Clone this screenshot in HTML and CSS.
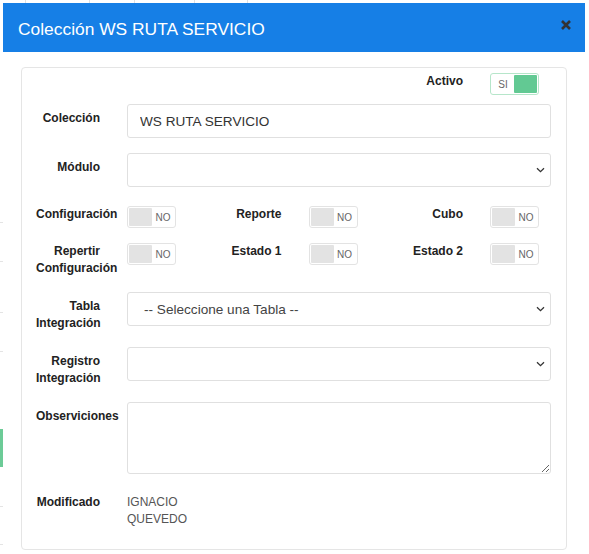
FILE: index.html
```html
<!DOCTYPE html>
<html lang="es">
<head>
<meta charset="utf-8">
<title>Colección WS RUTA SERVICIO</title>
<link rel="stylesheet" href="styles.css">
</head>
<body>
<div class="modal">
  <div class="modal-header">
    <h4 class="modal-title">Colección WS RUTA SERVICIO</h4>
    <button class="close" type="button" aria-label="Cerrar">
      <svg width="10" height="10" viewBox="0 0 10 10"><path d="M1 1L9 9M9 1L1 9" stroke="#333" stroke-width="2.6" fill="none"/></svg>
    </button>
  </div>
  <div class="modal-body">
    <div class="card">
      <div class="toggle-grid row-activo">
        <div class="group group-3">
          <label class="lbl">Activo</label>
          <div class="switch on"><span class="sw-text">SI</span><span class="sw-knob"></span></div>
        </div>
      </div>

      <div class="field row-coleccion">
        <label class="lbl">Colección</label>
        <input class="control" type="text" value="WS RUTA SERVICIO">
      </div>

      <div class="field row-modulo">
        <label class="lbl">Módulo</label>
        <div class="select-wrap">
          <select class="control"><option></option></select>
          <svg class="chev" width="9" height="6" viewBox="0 0 9 6"><path d="M1 1.2L4.5 4.6L8 1.2" stroke="#333" stroke-width="1.3" fill="none"/></svg>
        </div>
      </div>

      <div class="toggle-grid row-config">
        <div class="group">
          <label class="lbl">Configuración</label>
          <div class="switch"><span class="sw-knob"></span><span class="sw-text">NO</span></div>
        </div>
        <div class="group">
          <label class="lbl">Reporte</label>
          <div class="switch"><span class="sw-knob"></span><span class="sw-text">NO</span></div>
        </div>
        <div class="group">
          <label class="lbl">Cubo</label>
          <div class="switch"><span class="sw-knob"></span><span class="sw-text">NO</span></div>
        </div>
      </div>

      <div class="toggle-grid row-repertir">
        <div class="group">
          <label class="lbl">Repertir Configuración</label>
          <div class="switch"><span class="sw-knob"></span><span class="sw-text">NO</span></div>
        </div>
        <div class="group">
          <label class="lbl">Estado 1</label>
          <div class="switch"><span class="sw-knob"></span><span class="sw-text">NO</span></div>
        </div>
        <div class="group">
          <label class="lbl">Estado 2</label>
          <div class="switch"><span class="sw-knob"></span><span class="sw-text">NO</span></div>
        </div>
      </div>

      <div class="field row-tabla">
        <label class="lbl">Tabla Integración</label>
        <div class="select-wrap">
          <select class="control"><option>-- Seleccione una Tabla --</option></select>
          <svg class="chev" width="9" height="6" viewBox="0 0 9 6"><path d="M1 1.2L4.5 4.6L8 1.2" stroke="#333" stroke-width="1.3" fill="none"/></svg>
        </div>
      </div>

      <div class="field row-registro">
        <label class="lbl">Registro Integración</label>
        <div class="select-wrap">
          <select class="control"><option></option></select>
          <svg class="chev" width="9" height="6" viewBox="0 0 9 6"><path d="M1 1.2L4.5 4.6L8 1.2" stroke="#333" stroke-width="1.3" fill="none"/></svg>
        </div>
      </div>

      <div class="field row-obs">
        <label class="lbl">Observiciones</label>
        <textarea class="control area"></textarea>
      </div>

      <div class="field row-mod">
        <label class="lbl plain">Modificado</label>
        <div class="value">IGNACIO<br>QUEVEDO</div>
      </div>
    </div>
  </div>
</div>
</body>
</html>
```

FILE: styles.css
```css
* { box-sizing: border-box; }

html, body { height: 100%; }

body {
  margin: 0;
  padding: 3px 0 0 3px;
  overflow: hidden;
  font-family: "Liberation Sans", Arial, sans-serif;
  color: #222;
  background:
    linear-gradient(#e0e0e0, #e0e0e0) 25px 0 / 1px 3px no-repeat,
    linear-gradient(#e0e0e0, #e0e0e0) 89px 0 / 1px 3px no-repeat,
    linear-gradient(#e0e0e0, #e0e0e0) 134px 0 / 1px 3px no-repeat,
    linear-gradient(#e0e0e0, #e0e0e0) 194px 0 / 1px 3px no-repeat,
    linear-gradient(#e0e0e0, #e0e0e0) 247px 0 / 1px 3px no-repeat,
    linear-gradient(#e4e4e4, #e4e4e4) 0 222px / 3px 1px no-repeat,
    linear-gradient(#e4e4e4, #e4e4e4) 0 261px / 3px 1px no-repeat,
    linear-gradient(#e4e4e4, #e4e4e4) 0 312px / 3px 1px no-repeat,
    linear-gradient(#e4e4e4, #e4e4e4) 0 351px / 3px 1px no-repeat,
    linear-gradient(#e4e4e4, #e4e4e4) 0 506px / 3px 1px no-repeat,
    linear-gradient(#e4e4e4, #e4e4e4) 0 544px / 3px 1px no-repeat,
    linear-gradient(#6ccb97, #6ccb97) 0 429px / 3px 38px no-repeat,
    #fff;
}

.modal {
  width: 582px;
  min-height: 560px;
  background: #fff;
}

.modal-header {
  height: 49px;
  background: #167fe6;
  display: flex;
  align-items: center;
  justify-content: space-between;
  padding: 3px 14px 0 15px;
}

.modal-title {
  margin: 0;
  font-size: 17.4px;
  font-weight: 400;
  color: #fff;
}

.close {
  align-self: flex-start;
  margin-top: 14px;
  border: 0;
  background: none;
  padding: 0;
  display: flex;
  cursor: pointer;
}

.modal-body {
  padding: 15px 18px 0;
}

.card {
  border: 1px solid #e5e5e5;
  border-radius: 4px;
  padding: 5px 15px 21px 14px;
}

.toggle-grid {
  display: grid;
  grid-template-columns: repeat(3, 140px);
  column-gap: 41.5px;
}

.group {
  display: flex;
  align-items: flex-start;
  gap: 27px;
}

.group-3 { grid-column: 3; }

.lbl {
  width: 64px;
  flex: none;
  text-align: right;
  font-weight: 700;
  font-size: 12px;
  line-height: 17px;
  color: #222;
}

.field {
  display: flex;
  align-items: flex-start;
  gap: 27px;
}

.field .lbl { padding-top: 6px; }
.field .lbl.plain { padding-top: 0; }

.control {
  flex: 1;
  min-width: 0;
  width: 100%;
  height: 34px;
  margin: 0;
  border: 1px solid #e0e0e0;
  border-radius: 3px;
  background: #fff;
  font-family: "Liberation Sans", Arial, sans-serif;
  font-size: 13.6px;
  color: #333;
  padding: 0 12px;
}

.select-wrap {
  flex: 1;
  min-width: 0;
  position: relative;
  display: flex;
}

select.control {
  appearance: none;
  -webkit-appearance: none;
  padding-left: 16px;
  color: #444;
}

.chev {
  position: absolute;
  right: 6px;
  top: 14px;
  pointer-events: none;
}

.control.area {
  height: 72px;
  resize: vertical;
}

.value {
  font-size: 12px;
  line-height: 17px;
  color: #555;
}

.row-coleccion { margin-top: 9px; }
.row-modulo { margin-top: 15px; }
.row-config { margin-top: 19px; }
.row-repertir { margin-top: 15px; }
.row-tabla { margin-top: 15px; }
.row-registro { margin-top: 15px; }
.row-obs { margin-top: 15px; }
.row-mod { margin-top: 20px; }

.switch {
  flex: none;
  width: 49px;
  height: 22px;
  border: 1px solid #e3e3e3;
  border-radius: 3px;
  padding: 1px;
  display: flex;
  align-items: center;
  background: #fff;
}

.sw-knob {
  width: 23px;
  height: 18px;
  background: #e3e3e3;
  border-radius: 1px;
}

.sw-text {
  flex: 1;
  text-align: center;
  font-size: 10px;
  color: #666;
}

.switch.on { border-color: #b6e6ca; }
.switch.on .sw-knob { background: #62c993; }
```
